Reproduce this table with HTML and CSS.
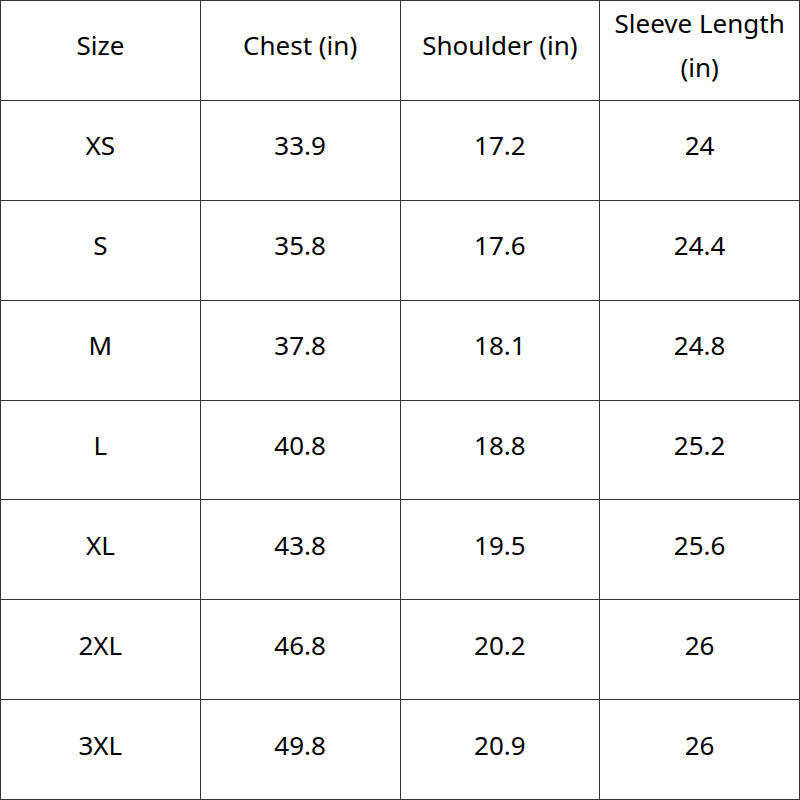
FILE: index.html
```html
<!DOCTYPE html>
<html>
<head>
<meta charset="utf-8">
<link rel="stylesheet" href="styles.css">
</head>
<body>
<table class="size-table">
  <tr class="head">
    <td>Size</td><td>Chest (in)</td><td>Shoulder (in)</td><td>Sleeve Length<br>(in)</td>
  </tr>
  <tr><td>XS</td><td>33.9</td><td>17.2</td><td>24</td></tr>
  <tr><td>S</td><td>35.8</td><td>17.6</td><td>24.4</td></tr>
  <tr><td>M</td><td>37.8</td><td>18.1</td><td>24.8</td></tr>
  <tr><td>L</td><td>40.8</td><td>18.8</td><td>25.2</td></tr>
  <tr><td>XL</td><td>43.8</td><td>19.5</td><td>25.6</td></tr>
  <tr><td>2XL</td><td>46.8</td><td>20.2</td><td>26</td></tr>
  <tr><td>3XL</td><td>49.8</td><td>20.9</td><td>26</td></tr>
</table>
</body>
</html>
```
FILE: styles.css
```css
html, body {
  margin: 0;
  padding: 0;
  background: #fff;
}
.size-table {
  width: 800px;
  height: 800px;
  border-collapse: collapse;
  table-layout: fixed;
  font-family: "Noto Sans", "Liberation Sans", sans-serif;
  font-size: 26px;
  color: #000;
}
.size-table td {
  border: 1px solid #333;
  height: 99px;
  padding: 0 0 10px 0;
  box-sizing: border-box;
  text-align: center;
  vertical-align: middle;
  line-height: 44px;
}
```
